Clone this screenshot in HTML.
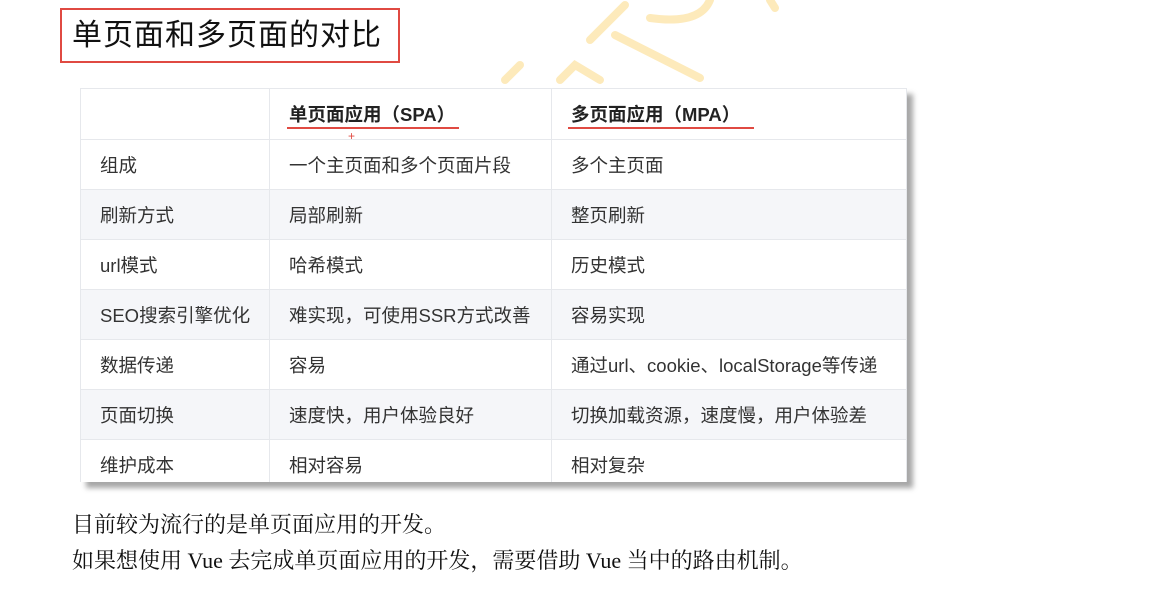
<!DOCTYPE html>
<html><head><meta charset="utf-8"><style>
body{margin:0;width:1161px;height:595px;background:#fff;position:relative;overflow:hidden;font-family:"Liberation Sans","Noto Sans CJK SC",sans-serif}
.title{position:absolute;left:60px;top:8px;width:326px;height:51px;border:2px solid #e04a42;font-size:30px;line-height:51px;padding-left:10px;box-sizing:content-box;color:#111;letter-spacing:1px}
.wm{position:absolute;left:0;top:0}
.tbl{position:absolute;left:80px;top:88px;width:827px;height:394px;background:#fff;box-shadow:6px 6px 5px rgba(0,0,0,0.35);overflow:hidden;border:1px solid #e6e8ec;border-bottom:none;box-sizing:border-box}
.row{position:absolute;left:0;width:828px;height:50px;border-top:1px solid #e6e8ec;font-size:18.5px;color:#333}
.row div{position:absolute;top:1px;line-height:50px}
.c1{left:19px}.c2{left:208px}.c3{left:490px}
.vl{position:absolute;top:0;width:1px;height:394px;background:#e6e8ec}
.alt{background:#f5f6f9}
.hd{font-weight:bold;color:#222}
.ul{position:absolute;height:2px;background:#e04a42}
.txt{position:absolute;left:72px;font-family:"Liberation Serif","Noto Serif CJK SC",serif;font-size:22px;color:#111}
</style></head><body>
<svg class="wm" width="1161" height="120"><g stroke="#fdeabb" stroke-width="8" fill="none" stroke-linecap="round">
<path d="M505 80 L520 65"/><path d="M560 80 L575 65 L600 80"/><path d="M590 40 L625 5"/><path d="M615 35 L700 78"/><path d="M650 18 Q700 25 710 0"/><path d="M770 0 L775 8"/></g></svg>
<div class="title">单页面和多页面的对比</div>
<div class="tbl">
<div class="row hd" style="top:0;border-top:none"><div class="c2">单页面应用（SPA）</div><div class="c3">多页面应用（MPA）</div></div>
<div class="ul" style="left:206px;top:38px;width:172px"></div>
<div class="ul" style="left:487px;top:38px;width:186px"></div>
<div style="position:absolute;left:267px;top:40px;color:#e04a42;font-size:12px">+</div>
<div class="row" style="top:50px"><div class="c1">组成</div><div class="c2">一个主页面和多个页面片段</div><div class="c3">多个主页面</div></div>
<div class="row alt" style="top:100px"><div class="c1">刷新方式</div><div class="c2">局部刷新</div><div class="c3">整页刷新</div></div>
<div class="row" style="top:150px"><div class="c1">url模式</div><div class="c2">哈希模式</div><div class="c3">历史模式</div></div>
<div class="row alt" style="top:200px"><div class="c1">SEO搜索引擎优化</div><div class="c2">难实现，可使用SSR方式改善</div><div class="c3">容易实现</div></div>
<div class="row" style="top:250px"><div class="c1">数据传递</div><div class="c2">容易</div><div class="c3">通过url、cookie、localStorage等传递</div></div>
<div class="row alt" style="top:300px"><div class="c1">页面切换</div><div class="c2">速度快，用户体验良好</div><div class="c3">切换加载资源，速度慢，用户体验差</div></div>
<div class="row" style="top:350px"><div class="c1">维护成本</div><div class="c2">相对容易</div><div class="c3">相对复杂</div></div>
<div class="vl" style="left:188px"></div><div class="vl" style="left:470px"></div>
</div>
<div class="txt" style="top:508px">目前较为流行的是单页面应用的开发。</div>
<div class="txt" style="top:544px">如果想使用 Vue 去完成单页面应用的开发，需要借助 Vue 当中的路由机制。</div>
</body></html>
